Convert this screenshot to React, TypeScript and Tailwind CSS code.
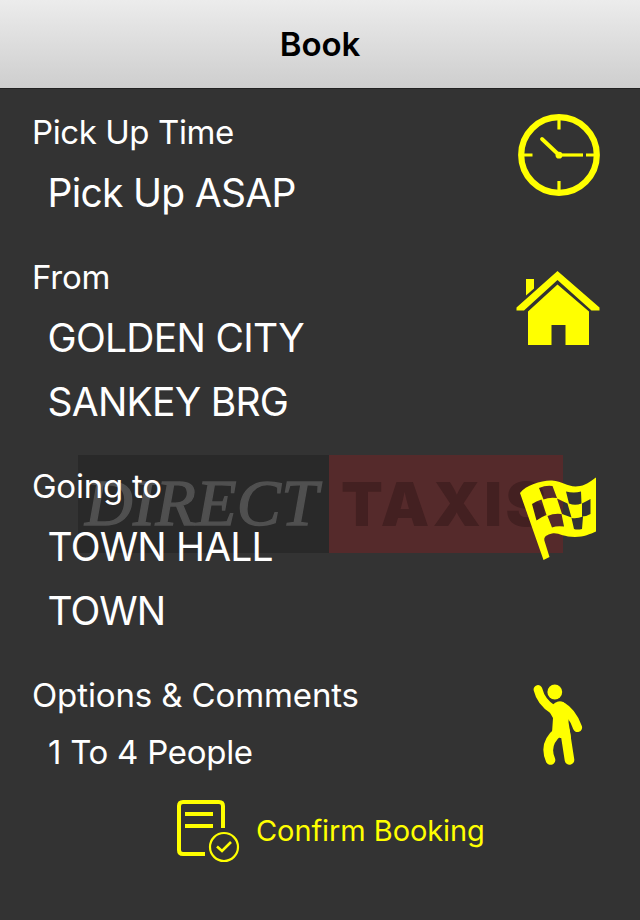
import type { ReactNode } from "react";

function ClockIcon() {
  return (
    <svg width="84" height="84" viewBox="517 113 84 84" fill="none" stroke="#ff0" className="block">
      <circle cx="559" cy="155" r="37.800" strokeWidth="6.200" />
      <path d="M559 119v10.500M559 181v10M523 155h9.500M586 155h9" strokeWidth="3.200" />
      <path d="M542 139L559 155" strokeWidth="3.800" strokeLinecap="round" />
      <path d="M559 155H583" strokeWidth="3.200" />
      <circle cx="559" cy="155.200" r="3.400" fill="#ff0" stroke="none" />
    </svg>
  );
}

function HouseIcon() {
  return (
    <svg width="84" height="76" viewBox="516 270 84 76" fill="#ff0" className="block">
      <path d="M526 279h8v9.500l-8 7z" />
      <path d="M557.500 271L599.500 307.500V310.500H591.500L557.500 280L524 310.500H516.500V307.500Z" />
      <path d="M557.500 284.500L589 311.500V345H565.500V325H551.500V345H528V311.500Z" />
    </svg>
  );
}

function FlagIcon() {
  return (
    <svg width="78" height="84" viewBox="519 476 78 84" fill="#ff0" className="block">
      <path
        fillRule="evenodd"
        d="M520 493C526 485 542 480 552 480.500C564 481.500 568 488 580 486C587 485 592 480 596 477.500V531.500C590 534 584 537 575 537C563 537 558 532 552 533.500C546 535 543.500 537 544.500 541L549.500 557L543.500 560Z
        M539 488Q546 485 552.500 486L557 498Q549 497 543.500 499.500Z
        M532 504Q536 501 541.500 499.500L546.500 515Q541 517 536.500 520.500Z
        M557 498.500L567.500 503.500L571.500 517.500L562 514Z
        M547.500 516Q554 513 561.500 514L564 526.500Q557 525.500 552 527.500Z
        M566 491.500Q574 493.500 581 491.500L581.500 503.500Q575 506 569 503.500Z
        M582 503.500Q586 501.500 590.500 499V514Q586 516.500 582 516.500Z
        M571.500 518Q577 519 583 516.500L582 529Q577 530 574 529Z"
      />
    </svg>
  );
}

function PersonIcon() {
  return (
    <svg width="50" height="82" viewBox="533 684 50 82" fill="none" stroke="#ff0" strokeLinecap="round" strokeLinejoin="round" className="block">
      <circle cx="554.800" cy="692" r="7.400" fill="#ff0" stroke="none" />
      <path d="M538 689.500Q541 702 553 709.500" strokeWidth="8.800" />
      <path d="M561 706Q572 712 577.500 727.500" strokeWidth="9.200" />
      <path d="M549 711Q552 703 558 701.500Q567 701 569 710L568.500 722L571 738H560L552 733L553 718Z" fill="#ff0" stroke="none" />
      <path d="M558 732Q543.500 744 550.500 760" strokeWidth="9.600" />
      <path d="M565 731L569.500 760" strokeWidth="9.600" />
    </svg>
  );
}

function ConfirmIcon() {
  return (
    <svg width="64" height="64" viewBox="176 799 64 64" fill="none" stroke="#ff0" className="block">
      <path d="M223 828V806Q223 802 219 802H183Q179 802 179 806V850Q179 854 183 854H205" strokeWidth="4" />
      <path d="M185 814h28M185 826h28" strokeWidth="4" />
      <circle cx="224" cy="847" r="14" strokeWidth="2.200" />
      <path d="M217 846.500l5 4.500 9-9" strokeWidth="2.600" />
    </svg>
  );
}

function Watermark() {
  return (
    <div className="absolute left-[78px] top-[455px] flex h-[98px] w-[485px]" aria-hidden="true">
      <div className="w-[251px] bg-[#292929] pl-[7px] font-['Liberation_Serif',serif] text-[66px] leading-[95px] italic tracking-[0.4px] text-[#505050] [-webkit-text-stroke:1.4px_#505050]">
        DIRECT
      </div>
      <div className="w-[234px] bg-[#552a2b] pl-[12px] font-['Inter',sans-serif] text-[61px] leading-[98px] font-black tracking-[3.5px] text-[#432021]">
        TAXIS
      </div>
    </div>
  );
}

function Section({ label, labelTracking, lines, tracking, children }: { label: string; labelTracking: string; lines: string[]; tracking: string[]; children: ReactNode }) {
  return (
    <section className="mb-6 flex items-start justify-between">
      <div>
        <h2 className={`h-[57px] pl-8 text-[33px] leading-[57px] ${labelTracking}`}>{label}</h2>
        {lines.map((line, i) => (
          <p key={line} className={`h-16 pl-[47.500px] text-[39px] leading-[64px] ${tracking[i]}`}>
            {line}
          </p>
        ))}
      </div>
      {children}
    </section>
  );
}

export default function App() {
  return (
    <div className="relative h-[920px] w-[640px] overflow-hidden bg-[#333] font-['Inter',sans-serif] text-white">
      <Watermark />
      <header className="flex h-[89px] items-center justify-center border-b border-[#222] bg-linear-to-b from-[#ececec] to-[#cecece]">
        <h1 className="pt-[2px] text-[33px] font-semibold tracking-[-0.1px] text-black">Book</h1>
      </header>
      <main className="relative whitespace-nowrap pt-[15px]">
        <Section label="Pick Up Time" labelTracking="tracking-[-0.420px]" lines={["Pick Up ASAP"]} tracking={["tracking-[-0.700px]"]}>
          <div className="mr-[39px] mt-[9px]"><ClockIcon /></div>
        </Section>
        <Section label="From" labelTracking="tracking-[-0.200px]" lines={["GOLDEN CITY", "SANKEY BRG"]} tracking={["tracking-[-0.700px]", "tracking-[-0.750px]"]}>
          <div className="mr-10 mt-[21px]"><HouseIcon /></div>
        </Section>
        <Section label="Going to" labelTracking="tracking-[-0.250px]" lines={["TOWN HALL", "TOWN"]} tracking={["tracking-[-0.820px]", "tracking-[-1px]"]}>
          <div className="mr-[43px] mt-[18px]"><FlagIcon /></div>
        </Section>
        <section className="flex items-start justify-between">
          <div>
            <h2 className="h-[57px] pl-8 text-[33px] leading-[57px] tracking-[-0.120px]">Options &amp; Comments</h2>
            <p className="h-14 pl-12 text-[33px] leading-[56px] tracking-[-0.280px]">1 To 4 People</p>
          </div>
          <div className="mr-[57px] mt-[17px]"><PersonIcon /></div>
        </section>
        <button className="mt-[19px] flex items-start pl-[176px] text-[#ff0]">
          <ConfirmIcon />
          <span className="pl-4 text-[29px] leading-[64px] tracking-[-0.080px]">Confirm Booking</span>
        </button>
      </main>
    </div>
  );
}
